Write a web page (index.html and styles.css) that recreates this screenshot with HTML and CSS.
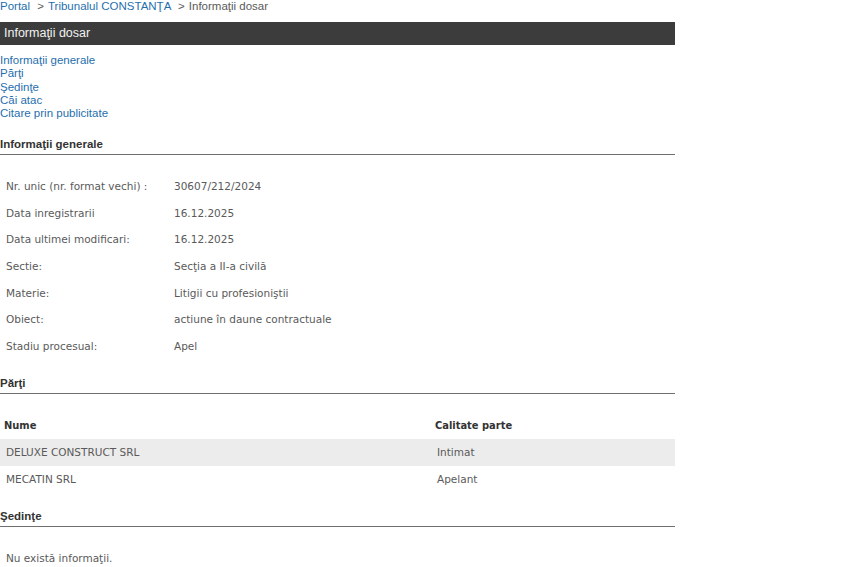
FILE: index.html
```html
<!DOCTYPE html>
<html lang="ro">
<head>
<meta charset="UTF-8">
<title>Informaţii dosar</title>
<link rel="stylesheet" href="styles.css">
</head>
<body>
    <div id="page">
        <div class="crumbs">
            <a href="#">Portal</a>
            <span class="sep">&gt;</span>
            <a href="#">Tribunalul CONSTANŢA</a>
            <span class="sep">&gt;</span>
            <span>Informaţii dosar</span>
        </div>
        <div class="bar">Informaţii dosar</div>

        <ul class="nav">
            <li><a href="#generale">Informaţii generale</a></li>
            <li><a href="#parti">Părţi</a></li>
            <li><a href="#sedinte">Şedinţe</a></li>
            <li><a href="#cai">Căi atac</a></li>
            <li><a href="#citare">Citare prin publicitate</a></li>
        </ul>

        <h2 class="section-title" id="generale">Informaţii generale</h2>
        <table class="details">
            <tr><td class="label">Nr. unic (nr. format vechi) :</td><td>30607/212/2024</td></tr>
            <tr><td class="label">Data inregistrarii</td><td>16.12.2025</td></tr>
            <tr><td class="label">Data ultimei modificari:</td><td>16.12.2025</td></tr>
            <tr><td class="label">Sectie:</td><td>Secţia a II-a civilă</td></tr>
            <tr><td class="label">Materie:</td><td>Litigii cu profesioniştii</td></tr>
            <tr><td class="label">Obiect:</td><td>actiune în daune contractuale</td></tr>
            <tr><td class="label">Stadiu procesual:</td><td>Apel</td></tr>
        </table>

        <h2 class="section-title" id="parti">Părţi</h2>
        <table class="parties">
            <tr><th class="name">Nume</th><th>Calitate parte</th></tr>
            <tr class="odd"><td>DELUXE CONSTRUCT SRL</td><td>Intimat</td></tr>
            <tr><td>MECATIN SRL</td><td>Apelant</td></tr>
        </table>

        <h2 class="section-title" id="sedinte">Şedinţe</h2>
        <p class="empty">Nu există informaţii.</p>
    </div>
</body>
</html>
```

FILE: styles.css
```css
:root {
    --link: #1f6fae;
    --text: #5a5a5a;
    --bar-bg: #3c3c3c;
    --rule: #6f6f6f;
    --row-alt: #ececec;
}
body {
    margin: 0;
    font-family: "Liberation Sans", Arial, sans-serif;
    color: var(--text);
}
#page {
    width: 675px;
}
a {
    color: var(--link);
    text-decoration: none;
}
.crumbs {
    font-size: 11.5px;
    line-height: 13px;
    height: 14px;
}
.crumbs .sep {
    margin: 0 1px 0 4px;
}
.bar {
    margin-top: 8px;
    height: 23px;
    line-height: 22px;
    padding-left: 4px;
    background: var(--bar-bg);
    color: #f2f2f2;
    font-size: 12.5px;
}
.nav {
    list-style: none;
    margin: 9px 0 0 0;
    padding: 0;
    font-size: 11.5px;
    line-height: 13.3px;
}
.section-title {
    margin: 17px 0 0 0;
    padding-bottom: 3px;
    border-bottom: 1px solid var(--rule);
    font-size: 11.5px;
    line-height: 14px;
    font-weight: bold;
    color: #333;
}
.details, .parties {
    border-collapse: collapse;
    margin-top: 17px;
    margin-bottom: 17px;
    font-family: "DejaVu Sans", Verdana, sans-serif;
    font-size: 10.5px;
}
.details td {
    height: 26.7px;
    padding: 0 0 0 6px;
    vertical-align: middle;
}
.details td.label {
    width: 162px;
}
.parties {
    width: 100%;
    margin-top: 18px;
}
.parties th {
    text-align: left;
    color: #333;
    font-family: "DejaVu Sans Condensed", "DejaVu Sans", sans-serif;
    font-stretch: condensed;
    font-weight: bold;
    font-size: 11px;
    padding: 0 0 0 4px;
    height: 26.7px;
}
.parties td {
    height: 26.7px;
    padding: 0 0 0 6px;
}
.parties th.name {
    width: 427px;
}
.parties tr.odd {
    background: var(--row-alt);
}
.empty {
    margin: 18px 0 0 0;
    height: 26.7px;
    line-height: 26.7px;
    padding-left: 6px;
    font-family: "DejaVu Sans", Verdana, sans-serif;
    font-size: 10.5px;
}
```
